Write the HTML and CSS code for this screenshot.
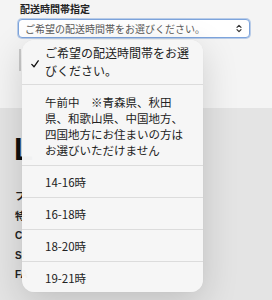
FILE: index.html
```html
<!DOCTYPE html>
<html lang="ja">
<head>
  <meta charset="UTF-8" />
  <meta name="viewport" content="width=device-width, initial-scale=1.0"/>
  <title>配送時間帯指定</title>
  <link rel="stylesheet" href="styles.css">
</head>
<body>

  <div class="page">
    <section class="delivery">
      <h3 class="label">配送時間帯指定</h3>
      <div class="select">
        <span>ご希望の配送時間帯をお選びください。</span>
        <svg class="chevron" width="6" height="9" viewBox="0 0 6 9">
          <path d="M1 3.4 L3 1.4 L5 3.4 M1 5.6 L3 7.6 L5 5.6" fill="none" stroke="#333" stroke-width="1.2" stroke-linecap="round" stroke-linejoin="round"/>
        </svg>
      </div>
      <div class="field"></div>
    </section>

    <!-- page content behind the picker, cut off by it -->
    <section class="info">
      <h2 class="brand">L</h2>
      <ul class="links">
        <li>フ</li>
        <li>特</li>
        <li>C</li>
        <li>SI</li>
        <li>FA</li>
      </ul>
    </section>

    <!-- picker popup -->
    <ul class="menu">
      <li class="item first checked">
        <svg class="check" width="8" height="8" viewBox="0 0 8 8">
          <path d="M0.8 4.4 L3 6.8 L7.2 0.8" fill="none" stroke="#111" stroke-width="1.3" stroke-linecap="round" stroke-linejoin="round"/>
        </svg>
        <span class="text">ご希望の配送時間帯をお選<br>びください。</span>
      </li>
      <li class="item note"><span class="text">午前中　※青森県、秋田県、和歌山県、中国地方、四国地方にお住まいの方はお選びいただけません</span></li>
      <li class="item">14-16時</li>
      <li class="item">16-18時</li>
      <li class="item">18-20時</li>
      <li class="item">19-21時</li>
    </ul>
  </div>

</body>
</html>
```

FILE: styles.css
```css
* {
  box-sizing: border-box;
}

body {
  margin: 0;
  font-family: "Noto Sans CJK JP", "Noto Sans", sans-serif;
  background-color: #e4e4e4;
  color: #222;
}

.page {
  position: relative;
  height: 300px;
  overflow: hidden;
}

.delivery {
  height: 108px;
  background-color: #f4f4f4;
  padding: 3px 22px 0 18px;
}

.label {
  margin: 0 0 4px 2px;
  font-size: 10px;
  line-height: 12px;
  font-weight: 700;
  color: #222;
}

.select {
  display: flex;
  align-items: center;
  justify-content: space-between;
  width: 232px;
  height: 19px;
  padding: 0 6px 0 6px;
  background: #fff;
  border: 1px solid #7da4dc;
  border-radius: 4px;
  box-shadow: 0 0 0 1px rgba(125,164,220,0.5);
  font-size: 10px;
  color: #5a5a5a;
}

.select span {
  line-height: 1;
}

.chevron {
  margin-right: 1px;
}

.field {
  margin-top: 11px;
  margin-left: 1px;
  width: 120px;
  height: 22px;
  border-left: 2px solid #c9c9c9;
}

.info {
  padding: 26px 0 0 14px;
}

.brand {
  margin: 0;
  font-family: "Liberation Sans", Arial, sans-serif;
  font-size: 31px;
  line-height: 32px;
  font-weight: 700;
  color: #111;
}

.links {
  list-style: none;
  margin: 21px 0 0 1px;
  padding: 0;
  font-size: 10px;
  line-height: 19.5px;
  font-weight: 700;
  color: #222;
  font-family: "Liberation Sans", "Noto Sans CJK JP", sans-serif;
}

.menu {
  position: absolute;
  left: 22px;
  top: 40px;
  width: 181px;
  height: 252px;
  margin: 0;
  padding: 0;
  list-style: none;
  background: rgba(246,246,246,0.98);
  border-radius: 12px;
  box-shadow: 0 10px 36px rgba(0,0,0,0.16), 0 0 1px rgba(0,0,0,0.08);
  overflow: hidden;
}

.item {
  position: relative;
  padding: 8px 12px 7px 23px;
  font-size: 11.5px;
  line-height: 16px;
  color: #222;
  border-bottom: 1px solid #dcdcdc;
}

.item:last-child {
  border-bottom: none;
}

.item .text {
  display: block;
  width: 141px;
}

.item.first {
  padding-top: 4px;
  padding-bottom: 4px;
  font-size: 12px;
  line-height: 18px;
}

.item.first .text {
  width: 150px;
}

.item.note {
  padding-top: 9px;
  padding-bottom: 7px;
}

.check {
  position: absolute;
  left: 9px;
  top: 20px;
}
```
